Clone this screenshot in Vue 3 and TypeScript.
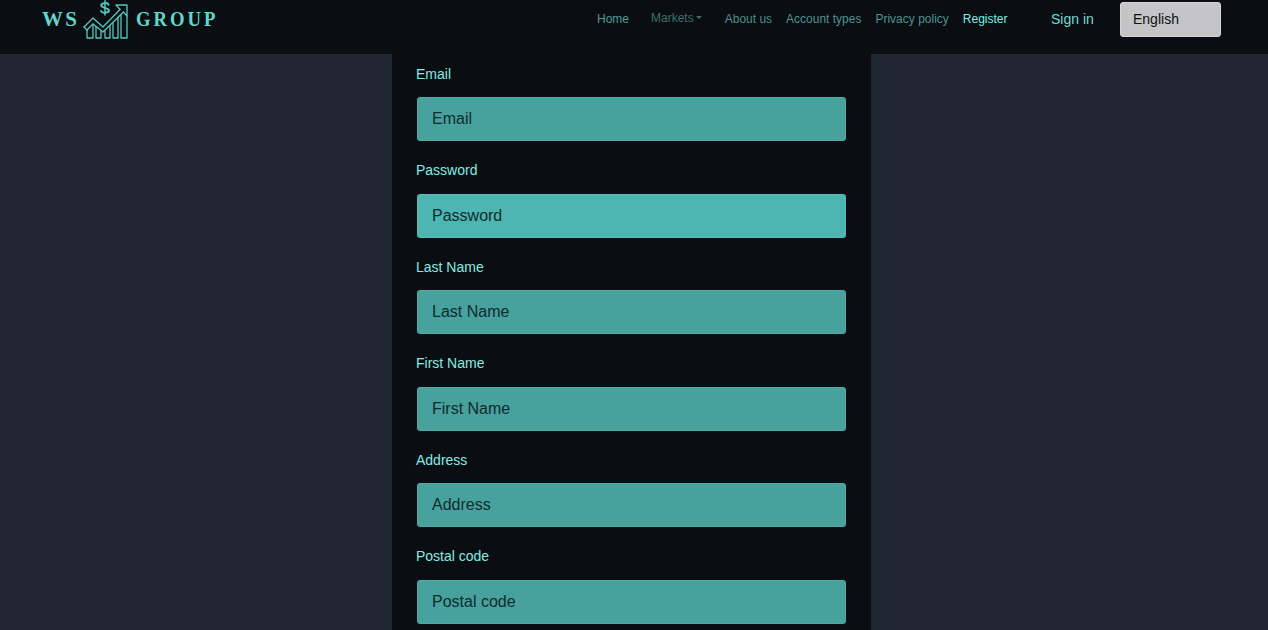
<script setup lang="ts">
interface Field { label: string; active?: boolean }
const fields: Field[] = [
  { label: 'Email' },
  { label: 'Password', active: true },
  { label: 'Last Name' },
  { label: 'First Name' },
  { label: 'Address' },
  { label: 'Postal code' },
]
</script>

<template>
  <div class="page">
    <header class="topbar">
      <div class="logo">
        <span class="logo-text ws">WS</span>
        <svg class="logo-icon" width="46" height="40" viewBox="0 0 46 40" fill="none" stroke="#55c8be" stroke-width="1.3" stroke-linejoin="round" stroke-linecap="round">
          <!-- zigzag trend band rising into the arrow -->
          <path d="M0 27 L9 18 L19 27 L36 9.5" />
          <path d="M3 30 L9 24 L19 32 L39.5 12" />
          <path d="M0 27 L3 30" />
          <!-- arrow head -->
          <path d="M32 5 H43 V16 L39.5 12 M36 9.5 L32 5" />
          <!-- bars -->
          <path d="M3 30 V38 H9 V24" />
          <path d="M12 26.5 V38 H17 V30.5" />
          <path d="M21 31 V38 H26 V26" />
          <path d="M29 23 V38 H34 V18" />
          <path d="M37 15 V38 H43 V16" />
          <!-- dollar -->
          <path d="M24.5 4.8 C24 2.6 17.5 2.2 17.2 5.4 C17 8.4 25 7.4 25 10.6 C25 13.4 18 13.4 17 11" stroke-width="1.9" />
          <path d="M21 0.8 V15" stroke-width="1.5" />
        </svg>
        <span class="logo-text group">GROUP</span>
      </div>
      <nav class="nav">
        <a class="nav-link home">Home</a>
        <a class="nav-link markets">Markets<i class="caret"></i></a>
        <a class="nav-link about">About us</a>
        <a class="nav-link">Account types</a>
        <a class="nav-link">Privacy policy</a>
        <a class="nav-link current">Register</a>
      </nav>
      <a class="signin">Sign in</a>
      <div class="lang">English</div>
    </header>

    <main class="panel">
      <form class="form" @submit.prevent>
        <div v-for="f in fields" :key="f.label" class="field">
          <label class="label">{{ f.label }}</label>
          <input class="input" :class="{ active: f.active }" :placeholder="f.label" />
        </div>
      </form>
    </main>
  </div>
</template>

<style>
html, body { margin: 0; background: #202632; overflow: hidden; }
</style>

<style scoped>
.page {
  height: 630px;
  overflow: hidden;
  background: #202632;
  font-family: "Liberation Sans", Arial, sans-serif;
}
.topbar {
  height: 54px;
  box-sizing: border-box;
  background: #0a0d11;
  display: flex;
  align-items: flex-start;
  padding: 0 47px 0 42px;
}
.logo {
  display: flex;
  align-items: flex-start;
  height: 40px;
  width: 555px;
  flex: none;
}
.logo-text {
  font-family: "Liberation Serif", serif;
  font-weight: 700;
  font-size: 22px;
  line-height: 24px;
  color: #62d6cb;
  margin-top: 7px;
  transform: scaleX(0.85);
  transform-origin: left center;
}
.ws { letter-spacing: 2.5px; width: 42px; transform: scaleX(0.95); }
.group { letter-spacing: 3.5px; margin-left: 6px; }
.logo-icon { flex: none; overflow: visible; }
.nav {
  display: flex;
  align-items: flex-start;
  gap: 14px;
  font-size: 12px;
  line-height: 14px;
  margin-top: 12px;
  width: 454px;
  flex: none;
}
.nav-link { color: #4d9391; white-space: nowrap; }
.home { margin-right: 8px; color: #4f9c9a; }
.markets { color: #3d6f6e; margin-top: -1px; margin-right: 9px; }
.about { color: #4a8f8d; }
.current { color: #7deee4; }
.caret {
  display: inline-block;
  vertical-align: 3px;
  margin-left: 2px;
  border-top: 3px solid #3d6f6e;
  border-left: 3px solid transparent;
  border-right: 3px solid transparent;
}
.signin {
  font-size: 14px;
  line-height: 16px;
  margin-top: 11px;
  color: #6fdcd4;
  width: 69px;
  flex: none;
}
.lang {
  width: 101px;
  height: 35px;
  margin-top: 2px;
  box-sizing: border-box;
  padding: 0 12px;
  font-size: 14px;
  line-height: 32px;
  color: #101114;
  background: #c5c4c7;
  border-radius: 3px;
  border: 1px solid #d6d4d8;
}
.panel {
  width: 479px;
  margin-left: 392px;
  box-sizing: border-box;
  padding: 9.75px 24px 0 24px;
  height: 576px;
  background: #0a0d11;
}
.form { display: flex; flex-direction: column; gap: 19px; }
.field { display: flex; flex-direction: column; gap: 12.5px; }
.label {
  font-size: 14px;
  line-height: 21px;
  color: #83ebe4;
}
.input {
  display: block;
  width: 431px;
  height: 46px;
  box-sizing: border-box;
  margin: 0;
  margin-top: -1px;
  margin-bottom: -1px;
  padding: 0 15px;
  font: 16px "Liberation Sans", Arial, sans-serif;
  background: #47a19d;
  border: 1px solid #0a0d11;
  border-radius: 4px;
  box-shadow: inset 0 0 0 1px #52aaa6;
  outline: none;
}
.input::placeholder { color: #0f2b2e; opacity: 1; }
.input.active { background: #4db6b2; box-shadow: inset 0 0 0 1px #56bab5; }
</style>
